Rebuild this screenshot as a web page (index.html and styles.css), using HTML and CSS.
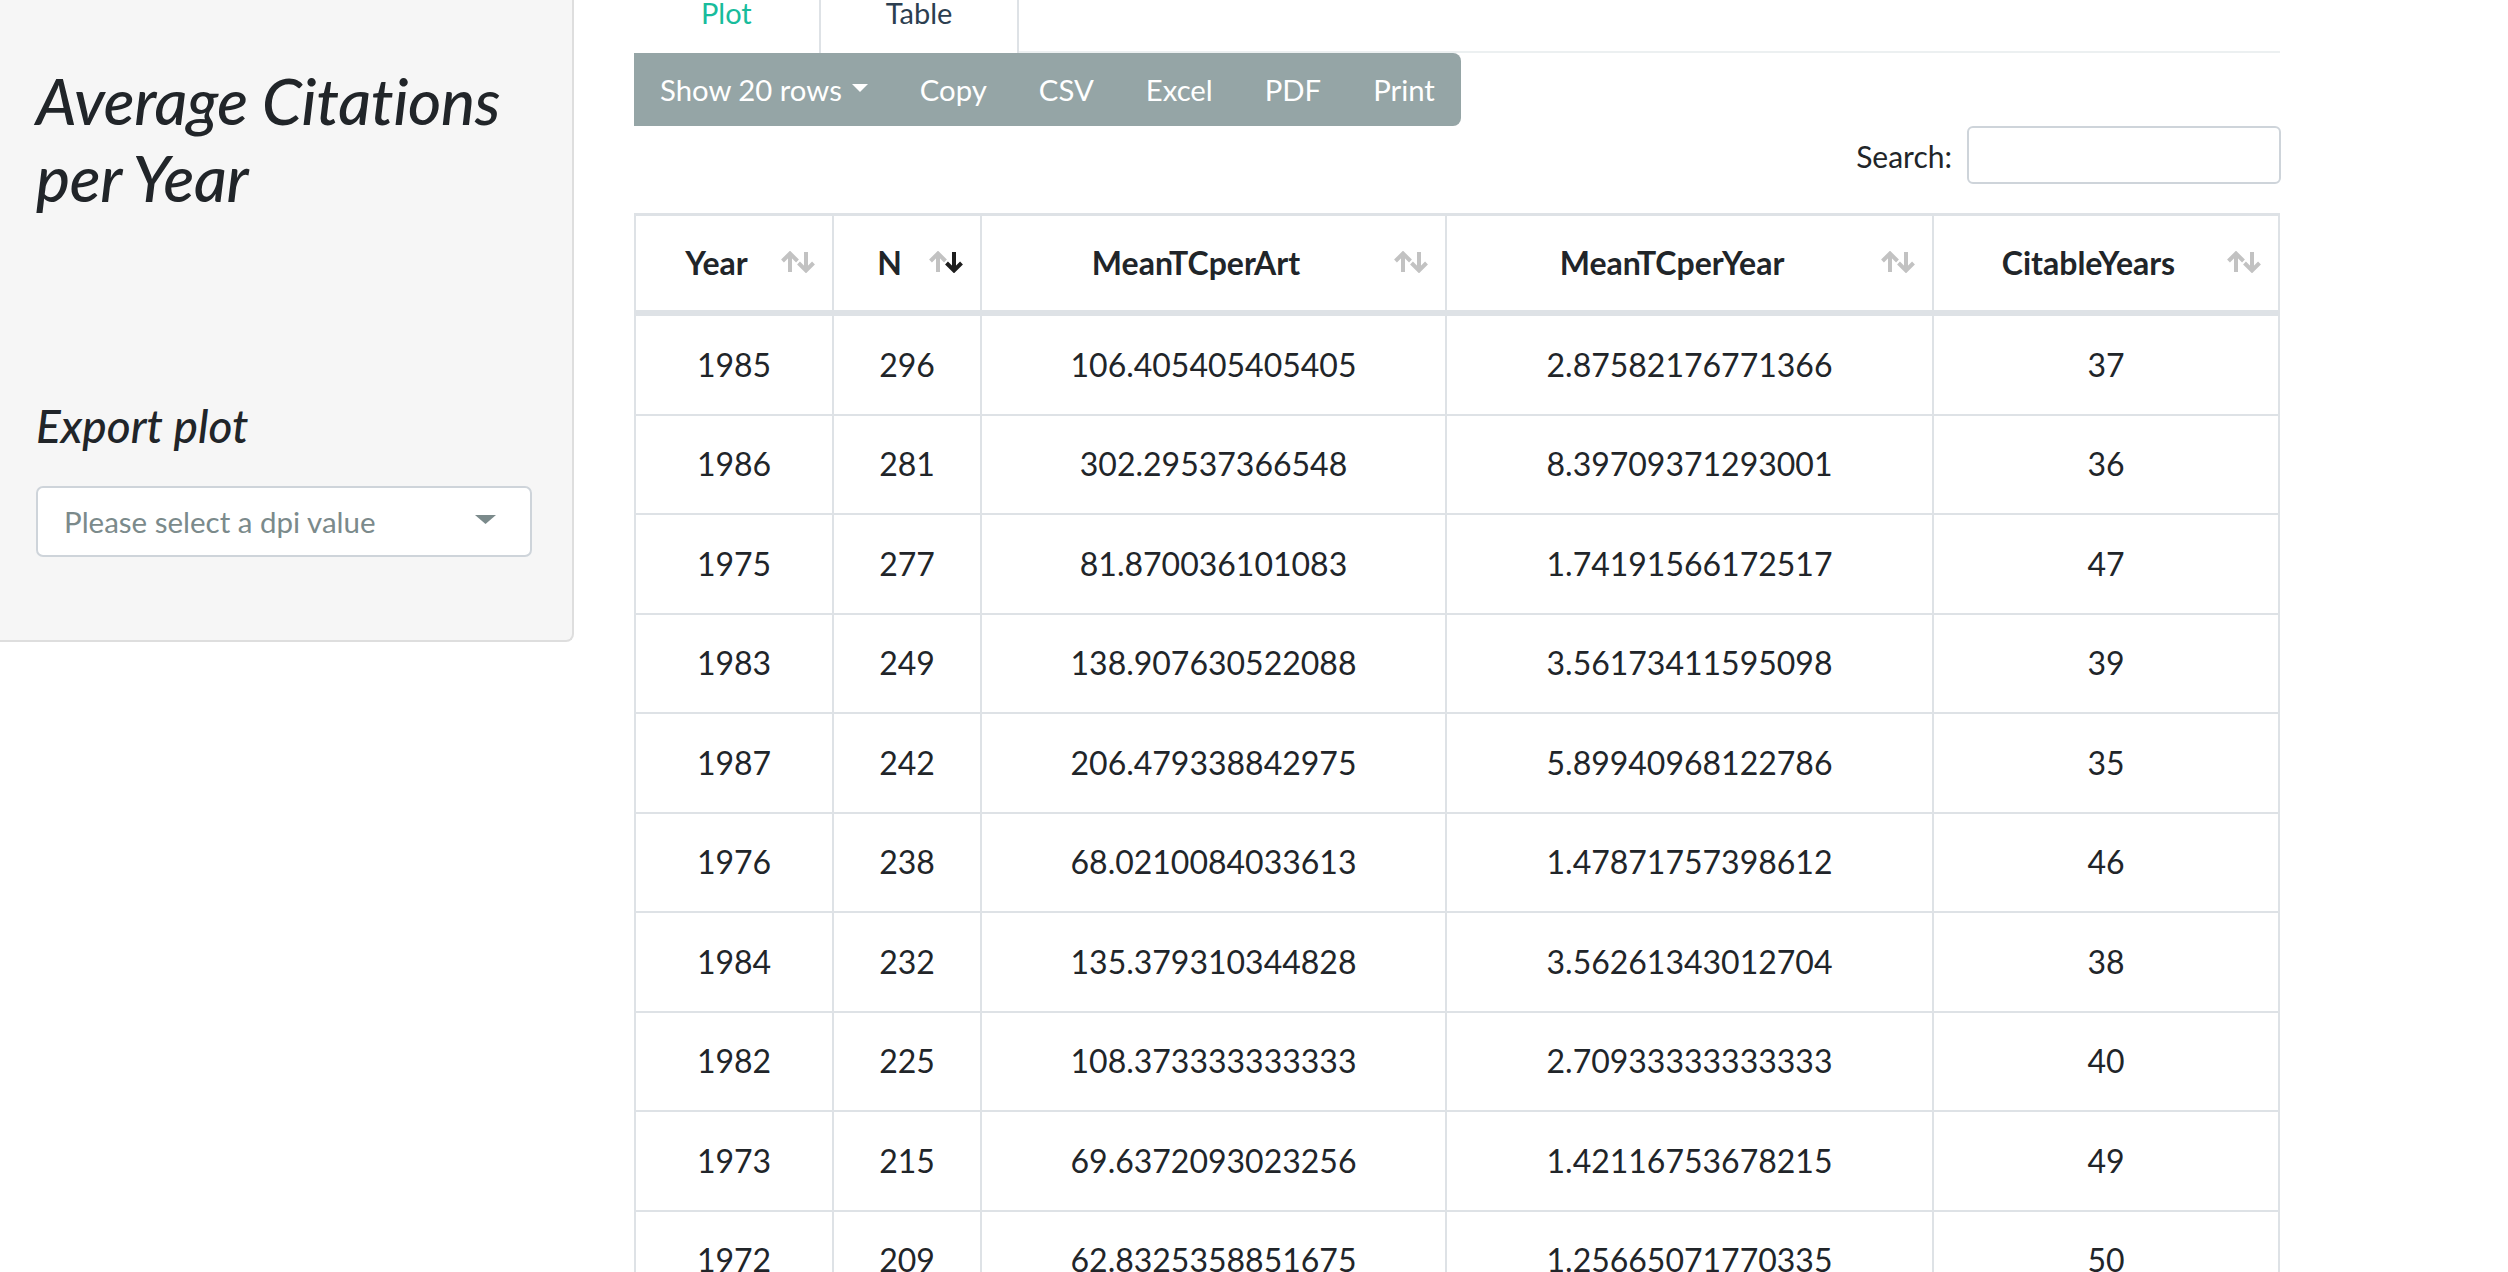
FILE: index.html
```html
<!DOCTYPE html>
<html lang="en">
<head>
<meta charset="utf-8">
<title>Average Citations per Year</title>
<link rel="stylesheet" href="styles.css">
</head>
<body>
<div class="page">
  <aside class="sidebar">
    <h2 class="title">Average Citations per Year</h2>
    <h3 class="export">Export plot</h3>
    <div class="select">
      <span class="placeholder">Please select a dpi value</span>
      <svg class="select-caret" width="21" height="9" viewBox="0 0 21 9"><path d="M0 0 H21 L10.5 9 Z" fill="#7b8a8b"/></svg>
    </div>
  </aside>

  <main class="main">
    <nav class="tabs">
      <div class="tab">Plot</div>
      <div class="tab active">Table</div>
      <div class="tab-fill"></div>
    </nav>

    <div class="toolbar">
      <span class="btn">Show 20 rows<svg class="btn-caret" width="16" height="8" viewBox="0 0 16 8"><path d="M0 0 H16 L8 8 Z" fill="#ffffff"/></svg></span>
      <span class="btn">Copy</span>
      <span class="btn">CSV</span>
      <span class="btn">Excel</span>
      <span class="btn">PDF</span>
      <span class="btn">Print</span>
    </div>

    <div class="search-row">
      <label class="search-label">Search:</label>
      <div class="search-input"></div>
    </div>

    <table class="grid">
      <colgroup>
        <col class="c1"><col class="c2"><col class="c3"><col class="c4"><col class="c5">
      </colgroup>
      <thead>
        <tr>
          <th><div class="th-in"><span class="lbl">Year</span><svg class="sort" width="34" height="22" viewBox="0 0 34 22"><path d="M9 21 V2.5 M1.5 10 L9 2.5 L16.5 10" fill="none" stroke="#c2c2c2" stroke-width="4"/><path d="M25 1 V19.5 M17.5 12 L25 19.5 L32.5 12" fill="none" stroke="#c2c2c2" stroke-width="4"/></svg></div></th>
          <th><div class="th-in"><span class="lbl">N</span><svg class="sort" width="34" height="22" viewBox="0 0 34 22"><path d="M9 21 V2.5 M1.5 10 L9 2.5 L16.5 10" fill="none" stroke="#c2c2c2" stroke-width="4"/><path d="M25 1 V19.5 M17.5 12 L25 19.5 L32.5 12" fill="none" stroke="#1e1e1e" stroke-width="4"/></svg></div></th>
          <th><div class="th-in"><span class="lbl">MeanTCperArt</span><svg class="sort" width="34" height="22" viewBox="0 0 34 22"><path d="M9 21 V2.5 M1.5 10 L9 2.5 L16.5 10" fill="none" stroke="#c2c2c2" stroke-width="4"/><path d="M25 1 V19.5 M17.5 12 L25 19.5 L32.5 12" fill="none" stroke="#c2c2c2" stroke-width="4"/></svg></div></th>
          <th><div class="th-in"><span class="lbl">MeanTCperYear</span><svg class="sort" width="34" height="22" viewBox="0 0 34 22"><path d="M9 21 V2.5 M1.5 10 L9 2.5 L16.5 10" fill="none" stroke="#c2c2c2" stroke-width="4"/><path d="M25 1 V19.5 M17.5 12 L25 19.5 L32.5 12" fill="none" stroke="#c2c2c2" stroke-width="4"/></svg></div></th>
          <th><div class="th-in"><span class="lbl">CitableYears</span><svg class="sort" width="34" height="22" viewBox="0 0 34 22"><path d="M9 21 V2.5 M1.5 10 L9 2.5 L16.5 10" fill="none" stroke="#c2c2c2" stroke-width="4"/><path d="M25 1 V19.5 M17.5 12 L25 19.5 L32.5 12" fill="none" stroke="#c2c2c2" stroke-width="4"/></svg></div></th>
        </tr>
      </thead>
      <tbody>
        <tr><td>1985</td><td>296</td><td>106.405405405405</td><td>2.87582176771366</td><td>37</td></tr>
        <tr><td>1986</td><td>281</td><td>302.29537366548</td><td>8.39709371293001</td><td>36</td></tr>
        <tr><td>1975</td><td>277</td><td>81.870036101083</td><td>1.74191566172517</td><td>47</td></tr>
        <tr><td>1983</td><td>249</td><td>138.907630522088</td><td>3.56173411595098</td><td>39</td></tr>
        <tr><td>1987</td><td>242</td><td>206.479338842975</td><td>5.89940968122786</td><td>35</td></tr>
        <tr><td>1976</td><td>238</td><td>68.0210084033613</td><td>1.47871757398612</td><td>46</td></tr>
        <tr><td>1984</td><td>232</td><td>135.379310344828</td><td>3.56261343012704</td><td>38</td></tr>
        <tr><td>1982</td><td>225</td><td>108.373333333333</td><td>2.70933333333333</td><td>40</td></tr>
        <tr><td>1973</td><td>215</td><td>69.6372093023256</td><td>1.42116753678215</td><td>49</td></tr>
        <tr><td>1972</td><td>209</td><td>62.8325358851675</td><td>1.25665071770335</td><td>50</td></tr>
      </tbody>
    </table>
  </main>
</div>
</body>
</html>
```

FILE: styles.css
```css
html, body {
  margin: 0;
  padding: 0;
  background: #ffffff;
}

body {
  width: 2508px;
  height: 1272px;
  overflow: hidden;
  font-family: Lato, "Noto Sans", "Liberation Sans", sans-serif;
  color: #212529;
}

.page {
  display: flex;
  align-items: flex-start;
}

/* Sidebar */
.sidebar {
  box-sizing: border-box;
  width: 574px;
  flex: 0 0 574px;
  background: #f6f6f6;
  border-right: 2px solid #dedede;
  border-bottom: 2px solid #dedede;
  border-bottom-right-radius: 8px;
  padding: 63px 36px 83px 36px;
}

.title {
  margin: 0;
  font-size: 64px;
  line-height: 1.2;
  font-style: italic;
  font-weight: 500;
  color: #212529;
  letter-spacing: -0.3px;
}

.export {
  margin: 181px 0 0 0;
  font-size: 46px;
  line-height: 1.2;
  font-style: italic;
  font-weight: 500;
  color: #212529;
}

.select {
  box-sizing: border-box;
  margin-top: 33px;
  width: 496px;
  height: 71px;
  background: #ffffff;
  border: 2px solid #ced4da;
  border-radius: 7px;
  display: flex;
  align-items: center;
  justify-content: space-between;
  padding: 0 34px 0 26px;
}

.placeholder {
  font-size: 29.5px;
  color: #7b8a8b;
  line-height: 1;
}

.select-caret {
  display: block;
  margin-top: -3px;
}

/* Main */
.main {
  margin-left: 60px;
  width: 1646px;
  display: flex;
  flex-direction: column;
}

.tabs {
  display: flex;
  margin-top: -16.5px;
}

.tab {
  font-size: 29px;
  line-height: 1.5;
  padding: 5px 65px 19px 65px;
  border: 2px solid transparent;
  border-bottom: 0;
  color: #18bc9c;
  background: #ffffff;
}

.tab.active {
  color: #2c3e50;
  border-color: #dee2e6;
  border-top-left-radius: 6px;
  border-top-right-radius: 6px;
}

.tab-fill {
  flex: 1;
  border-bottom: 2px solid #ecf0f1;
}

.toolbar {
  align-self: flex-start;
  display: flex;
  background: #95a5a6;
  border-top-right-radius: 8px;
  border-bottom-right-radius: 8px;
}

.btn {
  display: flex;
  align-items: center;
  font-size: 29.3px;
  line-height: 45px;
  padding: 14px 26px;
  color: #ffffff;
}

.btn-caret {
  display: block;
  margin-left: 10px;
  margin-top: -4px;
}

.search-row {
  display: flex;
  justify-content: flex-end;
  align-items: center;
  margin-right: -1px;
}

.search-label {
  font-size: 30px;
  line-height: 1;
  color: #212529;
  margin-right: 15px;
  margin-top: 1px;
}

.search-input {
  box-sizing: border-box;
  width: 314px;
  height: 58px;
  border: 2px solid #ced4da;
  border-radius: 6px;
  background: #ffffff;
}

/* Table */
.grid {
  margin-top: 29px;
  width: 1646px;
  table-layout: fixed;
  border-collapse: separate;
  border-spacing: 0;
  font-size: 32px;
  color: #212529;
}

.c1 { width: 200px; }
.c2 { width: 148px; }
.c3 { width: 465px; }
.c4 { width: 487px; }
.c5 { width: 346px; }

.grid th {
  font-weight: 700;
  line-height: 48px;
  padding: 23px 17px 23px 20px;
  border-top: 3px solid #dee2e6;
  border-right: 2px solid #dee2e6;
  border-bottom: 6px solid #dee2e6;
  text-align: center;
  white-space: nowrap;
}

.grid th:first-child,
.grid td:first-child {
  border-left: 2px solid #dee2e6;
}

.th-in {
  display: flex;
  align-items: center;
}

.lbl {
  flex: 1;
  text-align: center;
}

.sort {
  display: block;
  flex: 0 0 34px;
  margin-left: 4px;
  margin-top: -3px;
}

.grid td {
  line-height: 48px;
  padding: 24.75px 8px;
  text-align: center;
  border-right: 2px solid #dee2e6;
  border-bottom: 2px solid #dee2e6;
  white-space: nowrap;
}
```
